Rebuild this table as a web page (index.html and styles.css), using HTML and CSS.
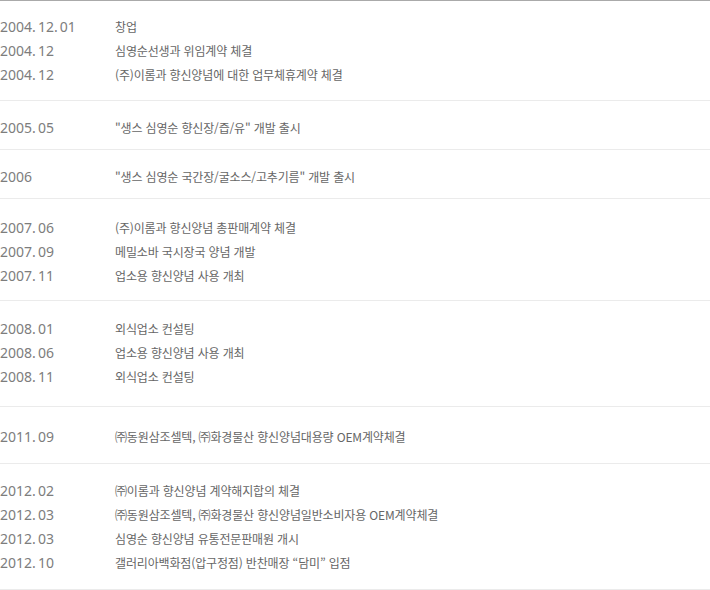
FILE: index.html
```html
<!DOCTYPE html>
<html lang="ko">
<head>
<meta charset="utf-8">
<title>연혁</title>
<link rel="stylesheet" href="styles.css">
</head>
<body>
<div class="history">
  <ul class="group ga">
    <li><span class="date">2004. 12. 01</span><span class="desc">창업</span></li>
    <li><span class="date">2004. 12</span><span class="desc">심영순선생과 위임계약 체결</span></li>
    <li><span class="date">2004. 12</span><span class="desc">(주)이롬과 향신양념에 대한 업무체휴계약 체결</span></li>
  </ul>
  <ul class="group gb">
    <li><span class="date">2005. 05</span><span class="desc">"생스 심영순 향신장/즙/유" 개발 출시</span></li>
  </ul>
  <ul class="group gb">
    <li><span class="date">2006</span><span class="desc">"생스 심영순 국간장/굴소스/고추기름" 개발 출시</span></li>
  </ul>
  <ul class="group gc">
    <li><span class="date">2007. 06</span><span class="desc">(주)이롬과 향신양념 총판매계약 체결</span></li>
    <li><span class="date">2007. 09</span><span class="desc">메밀소바 국시장국 양념 개발</span></li>
    <li><span class="date">2007. 11</span><span class="desc">업소용 향신양념 사용 개최</span></li>
  </ul>
  <ul class="group gd">
    <li><span class="date">2008. 01</span><span class="desc">외식업소 컨설팅</span></li>
    <li><span class="date">2008. 06</span><span class="desc">업소용 향신양념 사용 개최</span></li>
    <li><span class="date">2008. 11</span><span class="desc">외식업소 컨설팅</span></li>
  </ul>
  <ul class="group ge">
    <li><span class="date">2011. 09</span><span class="desc">㈜동원삼조셀텍, ㈜화경물산 향신양념대용량 OEM계약체결</span></li>
  </ul>
  <ul class="group gf">
    <li><span class="date">2012. 02</span><span class="desc">㈜이롬과 향신양념 계약해지합의 체결</span></li>
    <li><span class="date">2012. 03</span><span class="desc">㈜동원삼조셀텍, ㈜화경물산 향신양념일반소비자용 OEM계약체결</span></li>
    <li><span class="date">2012. 03</span><span class="desc">심영순 향신양념 유통전문판매원 개시</span></li>
    <li><span class="date">2012. 10</span><span class="desc">갤러리아백화점(압구정점) 반찬매장 “담미” 입점</span></li>
  </ul>
</div>
</body>
</html>
```
FILE: styles.css
```css
html, body {
  margin: 0;
  padding: 0;
  background: #fff;
}
body {
  font-family: "Noto Sans CJK KR", "Noto Sans", sans-serif;
  width: 710px;
}
.history {
  border-top: 1px solid #aaa;
}
.group {
  list-style: none;
  margin: 0;
  border-bottom: 1px solid #ebebeb;
}
.ga { padding: 13.5px 0 13.5px; }
.gb { padding: 14px 0 10px; }
.gc { padding: 16px 0 13px; }
.gd { padding: 15px 0 18px; }
.ge { padding: 17px 0 15px; }
.gf { padding: 14px 0 15px; }
.group li {
  display: flex;
  align-items: center;
  height: 24px;
}
.date {
  width: 115px;
  flex: none;
  font-family: "Noto Sans", sans-serif;
  font-size: 14px;
  color: #7d7d7d;
  word-spacing: -1.5px;
}
.desc {
  font-size: 12px;
  color: #666;
  letter-spacing: -0.15px;
}
```
